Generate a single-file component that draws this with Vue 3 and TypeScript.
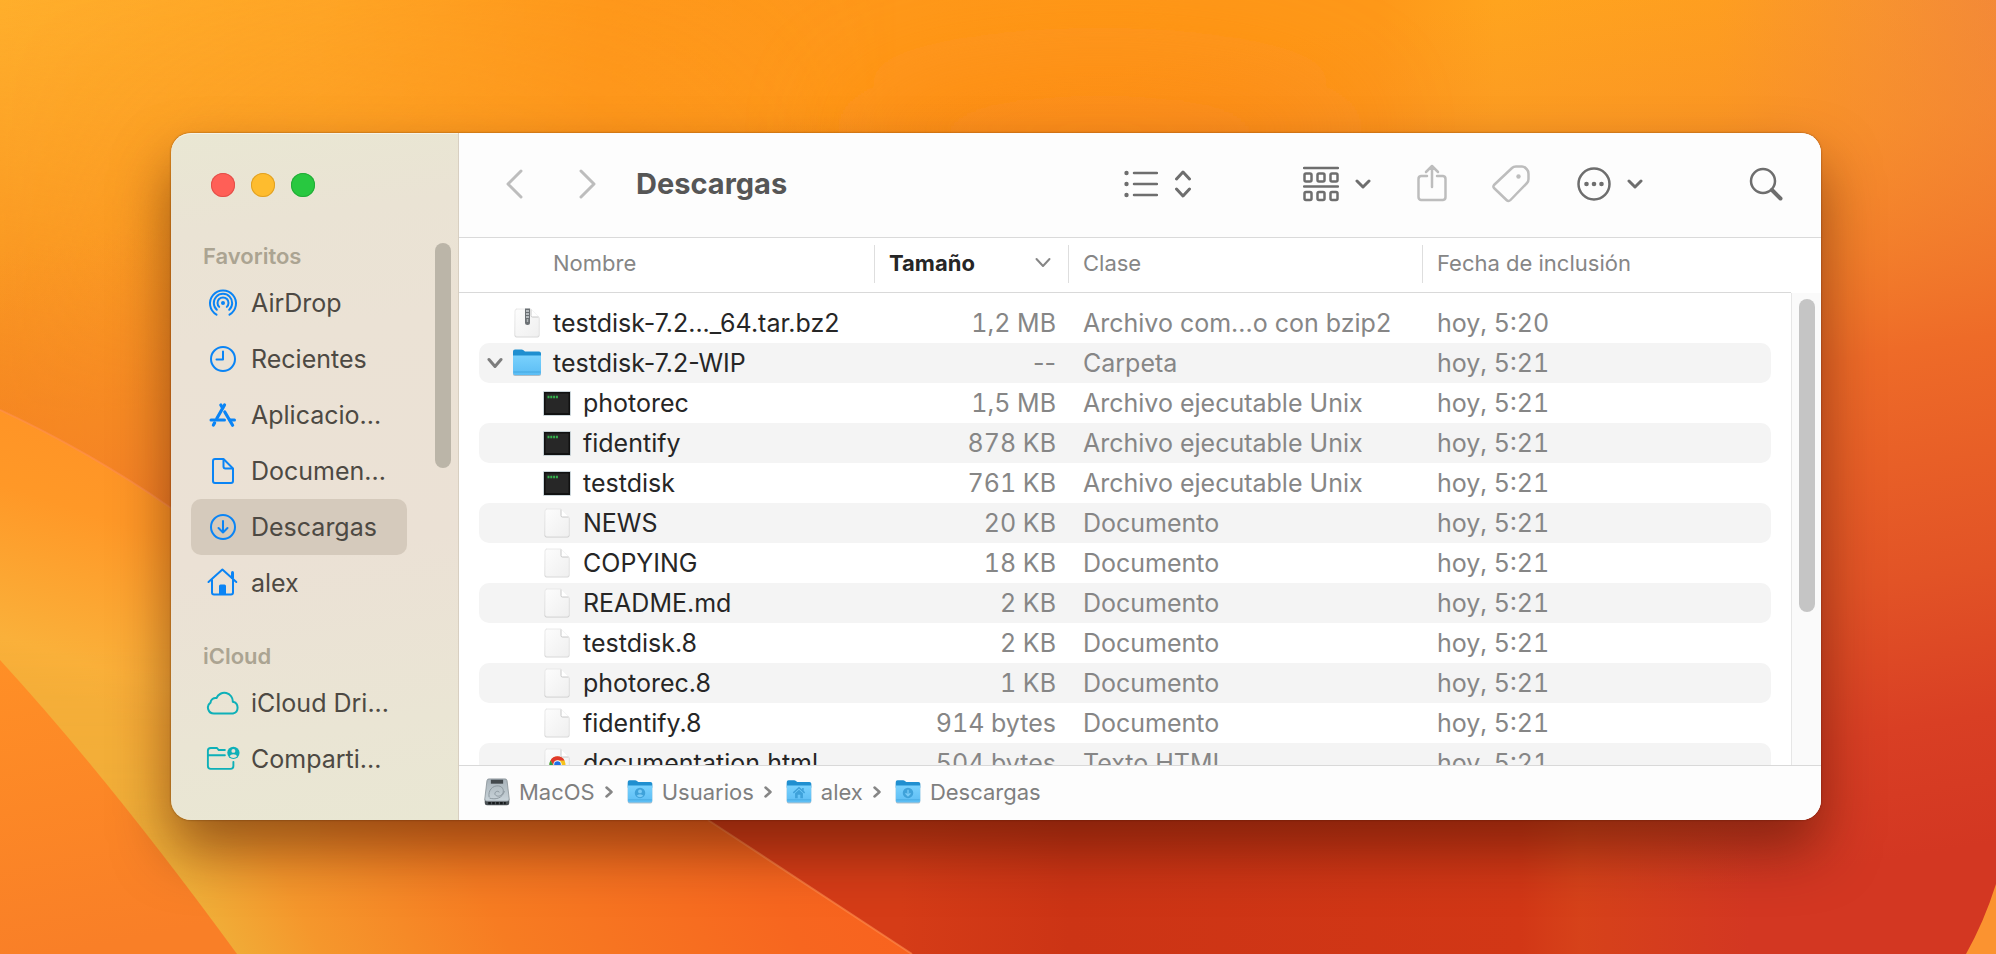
<script setup lang="ts">
interface Place {
  label: string
  icon: string
  active?: boolean
}

interface Section {
  title: string
  tint: string
  places: Place[]
}

interface FileRow {
  name: string
  size: string
  kind: string
  date: string
  icon: string
  nested?: boolean
  open?: boolean
}

const sections: Section[] = [
  {
    title: 'Favoritos',
    tint: 'blue',
    places: [
      { label: 'AirDrop', icon: 'airdrop' },
      { label: 'Recientes', icon: 'clock' },
      { label: 'Aplicacio...', icon: 'apps' },
      { label: 'Documen...', icon: 'page' },
      { label: 'Descargas', icon: 'download', active: true },
      { label: 'alex', icon: 'home' },
    ],
  },
  {
    title: 'iCloud',
    tint: 'teal',
    places: [
      { label: 'iCloud Dri...', icon: 'cloud' },
      { label: 'Comparti...', icon: 'shared' },
    ],
  },
]

const unix = 'Archivo ejecutable Unix'
const doc = 'Documento'

const files: FileRow[] = [
  { name: 'testdisk-7.2..._64.tar.bz2', size: '1,2 MB', kind: 'Archivo com...o con bzip2', date: 'hoy, 5:20', icon: 'zip' },
  { name: 'testdisk-7.2-WIP', size: '--', kind: 'Carpeta', date: 'hoy, 5:21', icon: 'folder', open: true },
  { name: 'photorec', size: '1,5 MB', kind: unix, date: 'hoy, 5:21', icon: 'exec', nested: true },
  { name: 'fidentify', size: '878 KB', kind: unix, date: 'hoy, 5:21', icon: 'exec', nested: true },
  { name: 'testdisk', size: '761 KB', kind: unix, date: 'hoy, 5:21', icon: 'exec', nested: true },
  { name: 'NEWS', size: '20 KB', kind: doc, date: 'hoy, 5:21', icon: 'file', nested: true },
  { name: 'COPYING', size: '18 KB', kind: doc, date: 'hoy, 5:21', icon: 'file', nested: true },
  { name: 'README.md', size: '2 KB', kind: doc, date: 'hoy, 5:21', icon: 'file', nested: true },
  { name: 'testdisk.8', size: '2 KB', kind: doc, date: 'hoy, 5:21', icon: 'file', nested: true },
  { name: 'photorec.8', size: '1 KB', kind: doc, date: 'hoy, 5:21', icon: 'file', nested: true },
  { name: 'fidentify.8', size: '914 bytes', kind: doc, date: 'hoy, 5:21', icon: 'file', nested: true },
  { name: 'documentation.html', size: '504 bytes', kind: 'Texto HTML', date: 'hoy, 5:21', icon: 'html', nested: true },
]

const crumbs = [
  { label: 'MacOS', icon: 'disk' },
  { label: 'Usuarios', icon: 'folder-user' },
  { label: 'alex', icon: 'folder-home' },
  { label: 'Descargas', icon: 'folder-down' },
]
</script>

<template>
  <svg class="defs" aria-hidden="true">
    <defs>
      <linearGradient id="g-sheet" x1="0" y1="0" x2="1" y2="1">
        <stop offset="0" stop-color="#fdfdfd" />
        <stop offset="1" stop-color="#efefef" />
      </linearGradient>
      <linearGradient id="g-folder" x1="0" y1="0" x2="0" y2="1">
        <stop offset="0" stop-color="#79d1fd" />
        <stop offset="1" stop-color="#5cbdf4" />
      </linearGradient>
      <linearGradient id="g-disk" x1="0" y1="0" x2="0" y2="1">
        <stop offset="0" stop-color="#a9b3ba" />
        <stop offset="1" stop-color="#c9d4da" />
      </linearGradient>
    </defs>

    <symbol id="i-airdrop" viewBox="0 0 34 34">
      <g fill="none" stroke="currentColor" stroke-width="2" stroke-linecap="round">
        <path d="M10.500 28.700 A13 13 0 1 1 23.500 28.700" />
        <path d="M10.800 23.800 A9.200 9.200 0 1 1 23.200 23.800" />
        <path d="M13.200 20.900 A5.500 5.500 0 1 1 20.800 20.900" />
      </g>
      <circle cx="17" cy="17" r="2" fill="currentColor" />
    </symbol>
    <symbol id="i-clock" viewBox="0 0 34 34">
      <g fill="none" stroke="currentColor" stroke-width="2" stroke-linecap="round" stroke-linejoin="round">
        <circle cx="17" cy="17" r="12" />
        <path d="M17 9.500V17.500H10.500" />
      </g>
    </symbol>
    <symbol id="i-apps" viewBox="0 0 34 34">
      <g fill="none" stroke="currentColor" stroke-linecap="round" stroke-linejoin="round">
        <path d="M18.500 7L10.800 20.500M8.600 24.900L7.400 27" stroke-width="3.200" />
        <path d="M14.800 7L16.600 10M18.800 14L26.600 27.200" stroke-width="3.200" />
        <path d="M5 22H18.500M24 22H28.500" stroke-width="3" />
      </g>
    </symbol>
    <symbol id="i-page" viewBox="0 0 34 34">
      <g fill="none" stroke="currentColor" stroke-width="2" stroke-linejoin="round">
        <path d="M9 5H17.500L27 14.500V27A2 2 0 0 1 25 29H9A2 2 0 0 1 7 27V7A2 2 0 0 1 9 5Z" />
        <path d="M17.500 5.500V12.500A2 2 0 0 0 19.500 14.500H26.500" />
      </g>
    </symbol>
    <symbol id="i-download" viewBox="0 0 34 34">
      <g fill="none" stroke="currentColor" stroke-width="2" stroke-linecap="round" stroke-linejoin="round">
        <circle cx="17" cy="17" r="12" />
        <path d="M17 11V22.500M12.500 18L17 22.500L21.500 18" />
      </g>
    </symbol>
    <symbol id="i-home" viewBox="0 0 34 34">
      <g fill="none" stroke="currentColor" stroke-width="2" stroke-linecap="round" stroke-linejoin="round">
        <path d="M2.500 16L16.400 3.600L30.300 16" />
        <path d="M6 14V26.500A2 2 0 0 0 8 28.500H25A2 2 0 0 0 27 26.500V14" />
        <path d="M26.500 6.500V11.500" stroke-width="3" />
      </g>
      <path d="M13 28V20A1.500 1.500 0 0 1 14.500 18.500H18.500A1.500 1.500 0 0 1 20 20V28Z" fill="currentColor" />
    </symbol>
    <symbol id="i-cloud" viewBox="0 0 34 34">
      <path
        d="M8 27.500A6 6 0 0 1 4.500 16.600A5 5 0 0 1 10.500 12A8.500 8.500 0 0 1 26.800 15.800A6 6 0 0 1 27 27.500Z"
        fill="none" stroke="currentColor" stroke-width="2" stroke-linejoin="round"
      />
    </symbol>
    <symbol id="i-shared" viewBox="0 0 36 34">
      <g fill="none" stroke="currentColor" stroke-width="2" stroke-linecap="round" stroke-linejoin="round">
        <path d="M20 7.500H13.500L11.500 5.300H5A3 3 0 0 0 2 8.300V24.500A3 3 0 0 0 5 27.500H26A3 3 0 0 0 29 24.500V20" />
        <path d="M2 13H20" />
      </g>
      <circle cx="29" cy="10.500" r="6.500" fill="currentColor" />
      <circle cx="29" cy="8.400" r="2.100" fill="#ebe2d5" />
      <path d="M25 14.100A4.200 3 0 0 1 33 14.100A5.400 5.400 0 0 1 25 14.100Z" fill="#ebe2d5" />
    </symbol>

    <symbol id="i-file" viewBox="0 0 32 32">
      <path d="M4 3H20L28.500 11V28.500A2 2 0 0 1 26.500 30.500H5.500A2 2 0 0 1 3.500 28.500Z" fill="#000" opacity=".16" />
      <path d="M5.500 2H20L28 10V27.500A2 2 0 0 1 26 29.500H6A2 2 0 0 1 4 27.500V4A2 2 0 0 1 6 2Z" fill="url(#g-sheet)" stroke="#e6e6e6" stroke-width=".8" />
      <path d="M20 2V8.500A1.500 1.500 0 0 0 21.500 10H28Z" fill="#fff" />
      <path d="M20 2.500V8.500A1.500 1.500 0 0 0 21.500 10H27.500" fill="none" stroke="#c2c2c2" stroke-width=".9" />
    </symbol>
    <symbol id="i-zip" viewBox="0 0 32 32">
      <use href="#i-file" />
      <path d="M14 1.500H19V15.500A2.500 2.500 0 0 1 14 15.500Z" fill="#6b7074" />
      <path d="M15 4H18M15 7H18M15 10H18" stroke="#cfd3d6" stroke-width="1.300" />
      <path d="M16.500 12V15" stroke="#aeb3b6" stroke-width="1.500" />
    </symbol>
    <symbol id="i-html" viewBox="0 0 32 32">
      <use href="#i-file" />
      <circle cx="16.500" cy="17.500" r="8" fill="#f6c21c" />
      <path d="M9.500 13.500A8 8 0 0 1 23.500 13.500H16.500L12.800 19.500Z" fill="#e0392b" />
      <path d="M9.500 13.500L13 19.500L16.500 25.500A8 8 0 0 1 9.500 13.500Z" fill="#2b9e48" />
      <circle cx="16.500" cy="17.500" r="4.200" fill="#fff" />
      <circle cx="16.500" cy="17.500" r="3.300" fill="#1f6fe8" />
    </symbol>
    <symbol id="i-exec" viewBox="0 0 32 32">
      <rect x="2" y="4" width="28" height="25" rx="1" fill="#9fb3bb" opacity=".55" />
      <rect x="3" y="5" width="26" height="23" fill="#111" />
      <rect x="4.500" y="6.500" width="23" height="19.500" fill="#272727" />
      <path d="M6.500 10H17" stroke="#35b04c" stroke-width="2.400" stroke-dasharray="2 .8" />
    </symbol>
    <symbol id="i-folder" viewBox="0 0 32 32">
      <path d="M2 6V27A2 2 0 0 0 4 29H28A2 2 0 0 0 30 27V6Z" fill="#31566c" opacity=".35" />
      <path d="M2 11V4.500A2 2 0 0 1 4 2.500H10.500A3 3 0 0 1 12.500 3.300L14 4.500H28A2 2 0 0 1 30 6.500V11Z" fill="#1f8fd0" />
      <path d="M2 8.500H30V26A2 2 0 0 1 28 28H4A2 2 0 0 1 2 26Z" fill="url(#g-folder)" />
      <path d="M2.500 25H29.500" stroke="#42a7e0" stroke-width="1" />
    </symbol>
    <symbol id="i-folder-user" viewBox="0 0 32 32">
      <use href="#i-folder" />
      <circle cx="16" cy="17" r="6" fill="#3fa2da" />
      <circle cx="16" cy="15.300" r="2.200" fill="#79cbf7" />
      <path d="M12.300 20.300A4 3 0 0 1 19.700 20.300A5 5 0 0 1 12.300 20.300Z" fill="#79cbf7" />
    </symbol>
    <symbol id="i-folder-home" viewBox="0 0 32 32">
      <use href="#i-folder" />
      <path d="M9.500 17L16 11L22.500 17" fill="none" stroke="#3fa2da" stroke-width="1.600" />
      <path d="M11.500 17.500L16 13.500L20.500 17.500V23H17.500V19H14.500V23H11.500Z" fill="#3fa2da" />
      <path d="M20.500 11.500V14.500" stroke="#3fa2da" stroke-width="1.800" />
    </symbol>
    <symbol id="i-folder-down" viewBox="0 0 32 32">
      <use href="#i-folder" />
      <circle cx="16" cy="17" r="6" fill="#3fa2da" />
      <path d="M16 13.500V20M13.200 17.500L16 20.300L18.800 17.500" fill="none" stroke="#79cbf7" stroke-width="1.500" />
    </symbol>
    <symbol id="i-disk" viewBox="0 0 32 32">
      <path d="M2 24H30V28.500A2.500 2.500 0 0 1 27.500 31H4.500A2.500 2.500 0 0 1 2 28.500Z" fill="#4a5054" />
      <path d="M4.500 3A2.500 2.500 0 0 1 7 1H25A2.500 2.500 0 0 1 27.500 3L30 24A2.500 2.500 0 0 1 27.500 26.500H4.500A2.500 2.500 0 0 1 2 24Z" fill="url(#g-disk)" stroke="#7c868c" stroke-width=".8" />
      <rect x="9" y="2" width="14" height="4.500" fill="#43494d" />
      <path d="M7 22C5.500 14 11 8.500 17.500 9C23.500 9.500 25 16 21 19.500C17 22.500 12 19.500 14 16.500C15.500 14.500 18.500 15 18.500 16.500M7.500 23C14 25 22 23.500 24.500 15" fill="none" stroke="#8a969d" stroke-width="1.100" />
      <path d="M6 28.800H26" stroke="#15181a" stroke-width="2.500" stroke-dasharray="3 1.500" />
    </symbol>
  </svg>

  <main class="desktop">
    <svg class="wallpaper" viewBox="0 0 1996 954" preserveAspectRatio="none" aria-hidden="true">
      <defs>
        <linearGradient id="w-top" x1="0" y1="0" x2="1996" y2="0" gradientUnits="userSpaceOnUse">
          <stop offset="0" stop-color="#ffaf2c" />
          <stop offset=".16" stop-color="#ffa726" />
          <stop offset=".3" stop-color="#ff991b" />
          <stop offset=".6" stop-color="#fe9719" />
          <stop offset=".69" stop-color="#fe9819" />
          <stop offset=".75" stop-color="#ffa41e" />
          <stop offset=".86" stop-color="#ffa01f" />
          <stop offset=".94" stop-color="#f89530" />
          <stop offset="1" stop-color="#f38a3a" />
        </linearGradient>
        <linearGradient id="w-left" x1="0" y1="0" x2="60" y2="420" gradientUnits="userSpaceOnUse">
          <stop offset="0" stop-color="#f98f1e" stop-opacity="0" />
          <stop offset="1" stop-color="#f6871c" />
        </linearGradient>
        <linearGradient id="w-left-mask" x1="0" y1="0" x2="900" y2="0" gradientUnits="userSpaceOnUse">
          <stop offset="0" stop-color="#fff" />
          <stop offset="1" stop-color="#000" />
        </linearGradient>
        <mask id="w-m"><rect width="1996" height="954" fill="url(#w-left-mask)" /></mask>
        <linearGradient id="w-red" x1="1500" y1="0" x2="1650" y2="900" gradientUnits="userSpaceOnUse">
          <stop offset="0" stop-color="#f58a2c" stop-opacity="0" />
          <stop offset=".2" stop-color="#f5852a" stop-opacity=".45" />
          <stop offset=".45" stop-color="#ee6b28" />
          <stop offset=".7" stop-color="#e25326" />
          <stop offset=".86" stop-color="#d93f24" />
          <stop offset="1" stop-color="#d33722" />
        </linearGradient>
        <linearGradient id="w-base" x1="900" y1="0" x2="1750" y2="0" gradientUnits="userSpaceOnUse">
          <stop offset="0" stop-color="#d53c17" />
          <stop offset=".2" stop-color="#cc3415" />
          <stop offset=".73" stop-color="#d23716" />
          <stop offset=".8" stop-color="#d74319" stop-opacity=".9" />
          <stop offset="1" stop-color="#d74319" stop-opacity="0" />
        </linearGradient>
        <linearGradient id="w-petal" x1="190" y1="890" x2="860" y2="560" gradientUnits="userSpaceOnUse">
          <stop offset="0" stop-color="#f0ae38" />
          <stop offset=".12" stop-color="#f5972c" />
          <stop offset=".35" stop-color="#f77c22" />
          <stop offset=".7" stop-color="#f7661f" />
          <stop offset="1" stop-color="#f95f1f" />
        </linearGradient>
        <linearGradient id="w-petal-top" x1="120" y1="440" x2="40" y2="690" gradientUnits="userSpaceOnUse">
          <stop offset="0" stop-color="#ff9426" />
          <stop offset=".3" stop-color="#ff9827" />
          <stop offset=".85" stop-color="#fab03a" />
          <stop offset="1" stop-color="#f6ae39" />
        </linearGradient>
        <linearGradient id="w-fade" x1="0" y1="640" x2="0" y2="860" gradientUnits="userSpaceOnUse">
          <stop offset="0" stop-color="#fff" />
          <stop offset="1" stop-color="#000" />
        </linearGradient>
        <mask id="w-mf"><rect width="320" height="954" fill="url(#w-fade)" /></mask>
        <linearGradient id="w-front" x1="0" y1="660" x2="60" y2="954" gradientUnits="userSpaceOnUse">
          <stop offset="0" stop-color="#ff8f26" />
          <stop offset="1" stop-color="#f97f27" />
        </linearGradient>
        <filter id="w-blur" x="-50%" y="-50%" width="200%" height="200%"><feGaussianBlur stdDeviation="50" /></filter>
      </defs>
      <rect width="1996" height="954" fill="url(#w-top)" />
      <rect width="1996" height="560" fill="url(#w-left)" mask="url(#w-m)" />
      <ellipse cx="1100" cy="130" rx="260" ry="70" fill="#fd8b12" opacity=".8" filter="url(#w-blur)" />
      <rect width="1996" height="954" fill="url(#w-red)" />
      <rect y="600" x="600" width="1396" height="354" fill="url(#w-base)" />
      <path d="M0 410Q90 452 171 508L708 820L912 954H0Z" fill="url(#w-petal)" />
      <path d="M0 410Q90 452 171 508L708 820L912 954H0Z" fill="url(#w-petal-top)" mask="url(#w-mf)" />
      <path d="M0 410Q90 452 171 508M708 820L912 954" fill="none" stroke="#ff8f50" stroke-width="2" opacity=".6" />
      <path d="M0 660Q110 780 237 954H0Z" fill="url(#w-front)" />
      <path d="M1996 884Q1984 922 1966 954H1996Z" fill="#fb9330" />
    </svg>

    <section class="window" aria-label="Descargas">
      <aside class="sidebar">
        <div class="lights">
          <button class="light close" aria-label="Cerrar"></button>
          <button class="light minimize" aria-label="Minimizar"></button>
          <button class="light expand" aria-label="Ampliar"></button>
        </div>
        <div class="places">
          <nav class="places-list">
            <section v-for="s in sections" :key="s.title" class="group">
              <h2 class="group-title">{{ s.title }}</h2>
              <a
                v-for="p in s.places" :key="p.label" href="#" class="place" :class="[s.tint, { active: p.active }]"
              >
                <svg class="place-icon"><use :href="'#i-' + p.icon" /></svg>
                <span>{{ p.label }}</span>
              </a>
            </section>
          </nav>
          <div class="side-thumb"></div>
        </div>
      </aside>

      <div class="main">
        <header class="toolbar">
          <div class="history">
            <button aria-label="Atrás">
              <svg width="18" height="30" viewBox="0 0 18 30"><path d="M16 2L3 15L16 28" class="line pale heavy" /></svg>
            </button>
            <button aria-label="Adelante">
              <svg width="18" height="30" viewBox="0 0 18 30"><path d="M2 2L15 15L2 28" class="line pale heavy" /></svg>
            </button>
          </div>
          <h1 class="title">Descargas</h1>
          <div class="tools">
            <button class="tool view" aria-label="Ver como lista">
              <svg width="34" height="28" viewBox="0 0 34 28">
                <path d="M10 3H33M10 14H33M10 25H33" class="line thick" />
                <g class="solid"><circle cx="2.500" cy="3" r="2.200" /><circle cx="2.500" cy="14" r="2.200" /><circle cx="2.500" cy="25" r="2.200" /></g>
              </svg>
              <svg width="18" height="28" viewBox="0 0 18 28"><path d="M2.500 9L9 2L15.500 9M2.500 19L9 26L15.500 19" class="line heavy" /></svg>
            </button>
            <button class="tool grouping" aria-label="Agrupar">
              <svg width="36" height="36" viewBox="0 0 36 36">
                <path d="M1 2H35M1 20.500H35" class="line thick" />
                <g class="line thick">
                  <rect x="1.500" y="7.500" width="7" height="8" rx="1.500" /><rect x="14.500" y="7.500" width="7" height="8" rx="1.500" /><rect x="27.500" y="7.500" width="7" height="8" rx="1.500" />
                  <rect x="1.500" y="26" width="7" height="8" rx="1.500" /><rect x="14.500" y="26" width="7" height="8" rx="1.500" /><rect x="27.500" y="26" width="7" height="8" rx="1.500" />
                </g>
              </svg>
              <svg width="16" height="12" viewBox="0 0 16 12"><path d="M2 3L8 9L14 3" class="line heavy" /></svg>
            </button>
            <button class="tool share" aria-label="Compartir">
              <svg width="30" height="40" viewBox="0 0 30 40">
                <path d="M10 12H4A3 3 0 0 0 1.500 15V33A3 3 0 0 0 4 36H26A3 3 0 0 0 28.500 33V15A3 3 0 0 0 26 12H20M15 23V2M9 8L15 2L21 8" class="line pale thick" />
              </svg>
            </button>
            <button class="tool tag" aria-label="Etiquetas">
              <svg width="38" height="38" viewBox="0 0 38 38">
                <path d="M2 20L20 3Q21.500 1.500 24 1.500H30Q32 1.500 33.500 3L35 4.500Q36.500 6 36.500 9V14Q36.500 16.500 35 18L18.500 35Q16.500 37 14.500 35L2 23Q.8 21.500 2 20Z" class="line pale thick" />
                <circle cx="26.500" cy="11.500" r="2.200" fill="#bdbdbd" />
              </svg>
            </button>
            <button class="tool more" aria-label="Más acciones">
              <svg width="34" height="34" viewBox="0 0 34 34">
                <circle cx="17" cy="17" r="15.500" class="line thick" />
                <g class="solid"><circle cx="9.500" cy="17" r="2.300" /><circle cx="17" cy="17" r="2.300" /><circle cx="24.500" cy="17" r="2.300" /></g>
              </svg>
              <svg width="16" height="12" viewBox="0 0 16 12"><path d="M2 3L8 9L14 3" class="line heavy" /></svg>
            </button>
            <button class="tool find" aria-label="Buscar">
              <svg width="34" height="34" viewBox="0 0 34 34">
                <circle cx="14" cy="14" r="12" class="line thick" />
                <path d="M23 23L31.500 31.500" class="line bold" />
              </svg>
            </button>
          </div>
        </header>

        <div class="listing">
          <div class="scroller">
            <table>
              <colgroup>
                <col class="c-name" />
                <col class="c-size" />
                <col class="c-kind" />
                <col />
              </colgroup>
              <thead>
                <tr>
                  <th scope="col" class="h-name">Nombre</th>
                  <th scope="col" aria-sort="descending">
                    <button class="sort">
                      Tamaño
                      <svg width="16" height="12" viewBox="0 0 16 12"><path d="M1.500 2L8 9L14.500 2" class="line gray" /></svg>
                    </button>
                  </th>
                  <th scope="col">Clase</th>
                  <th scope="col">Fecha de inclusión</th>
                </tr>
              </thead>
              <tbody>
                <tr v-for="f in files" :key="f.name">
                  <td class="name">
                    <div class="name-box" :class="{ nested: f.nested }">
                      <span class="slot">
                        <button v-if="f.open" aria-label="Contraer carpeta">
                          <svg width="16" height="12" viewBox="0 0 16 12"><path d="M2 2.500L8 9.500L14 2.500" class="line heavy mid" /></svg>
                        </button>
                      </span>
                      <svg class="file-icon"><use :href="'#i-' + f.icon" /></svg>
                      <span>{{ f.name }}</span>
                    </div>
                  </td>
                  <td class="size" :class="{ figures: f.size !== '--' }">{{ f.size }}</td>
                  <td class="kind">{{ f.kind }}</td>
                  <td class="date figures">{{ f.date }}</td>
                </tr>
              </tbody>
            </table>
          </div>
          <div class="track"><div class="thumb"></div></div>
        </div>

        <nav class="pathbar" aria-label="Ruta">
          <template v-for="(c, i) in crumbs" :key="c.label">
            <svg v-if="i" class="sep" width="8" height="12" viewBox="0 0 8 12"><path d="M1.500 1.500L6.500 6L1.500 10.500" class="line gray thick" /></svg>
            <a href="#" class="crumb">
              <svg class="crumb-icon"><use :href="'#i-' + c.icon" /></svg>
              <span>{{ c.label }}</span>
            </a>
          </template>
        </nav>
      </div>
    </section>
  </main>
</template>

<style>
html,
body {
  margin: 0;
}
</style>

<style scoped>
.defs {
  position: absolute;
  width: 0;
  height: 0;
}

.desktop {
  position: relative;
  box-sizing: border-box;
  height: 100vh;
  padding: 133px 175px 134px 171px;
  display: flex;
  overflow: hidden;
  background: #f58a20;
  font-family: Inter, "Liberation Sans", sans-serif;
  font-size: 25px;
  color: #262626;
}

.wallpaper {
  position: absolute;
  inset: 0;
  width: 100%;
  height: 100%;
}

.window {
  position: relative;
  flex: 1;
  min-width: 0;
  display: flex;
  border-radius: 20px;
  box-shadow: 0 0 2px rgba(60, 20, 0, 0.6), 0 30px 56px rgba(60, 15, 0, 0.5);
}

button {
  border: 0;
  padding: 0;
  background: none;
  font: inherit;
  color: inherit;
  display: flex;
  align-items: center;
}

a {
  color: inherit;
  text-decoration: none;
}

svg {
  display: block;
  flex: none;
}

.line {
  fill: none;
  stroke: #6e6e6e;
  stroke-width: 2;
  stroke-linecap: round;
  stroke-linejoin: round;
}
.thick { stroke-width: 2.5; }
.heavy { stroke-width: 3; }
.bold { stroke-width: 4; }
.pale { stroke: #bdbdbd; }
.gray { stroke: #868686; }
.mid { stroke: #7d7d7d; }
.solid { fill: #6e6e6e; }

/* Sidebar */
.sidebar {
  flex: none;
  width: 287px;
  display: flex;
  flex-direction: column;
  border-right: 1px solid #d8cfc1;
  border-radius: 20px 0 0 20px;
  background: linear-gradient(172deg, #e9e7d3 0%, #eae3d4 14%, #ebe2d5 30%, #ebe1d5 60%, #eae5d4 85%, #e9e7d3 100%);
  box-shadow: inset 0 1px 0 rgba(255, 255, 255, 0.5);
}

.lights {
  display: flex;
  gap: 16px;
  padding: 40px;
}

.light {
  width: 24px;
  height: 24px;
  border-radius: 50%;
}
.close { background: #ff5f57; box-shadow: inset 0 0 0 1px #e2504a; }
.minimize { background: #febc2e; box-shadow: inset 0 0 0 1px #e0a125; }
.expand { background: #28c840; box-shadow: inset 0 0 0 1px #24ab38; }

.places {
  flex: 1;
  min-height: 0;
  display: flex;
  justify-content: space-between;
}

.places-list {
  width: 216px;
  margin-left: 20px;
}

.group {
  display: flex;
  flex-direction: column;
}
.group + .group { margin-top: 26px; }

.group-title {
  margin: 0;
  padding-left: 12px;
  font-size: 22px;
  line-height: 38px;
  font-weight: 600;
  color: #aba492;
}

.place {
  display: flex;
  align-items: center;
  gap: 11px;
  height: 56px;
  padding-left: 15px;
  border-radius: 10px;
  color: #4d4943;
  white-space: nowrap;
}
.place.active { background: #d5cabc; }

.place-icon {
  width: 34px;
  height: 34px;
}
.blue .place-icon { color: #0a84f5; }
.teal .place-icon { color: #0eb0b8; }

.side-thumb {
  width: 16px;
  height: 225px;
  margin: 6px 7px 0 0;
  border-radius: 8px;
  background: #bbb5a8;
}

/* Content */
.main {
  flex: 1;
  min-width: 0;
  display: flex;
  flex-direction: column;
  border-radius: 0 20px 20px 0;
  overflow: hidden;
  background: #fff;
}

.toolbar {
  box-sizing: border-box;
  display: flex;
  align-items: center;
  height: 105px;
  padding-bottom: 2px;
  border-bottom: 1px solid #dadada;
  background: #fdfdfd;
}

.history {
  display: flex;
  gap: 56px;
  margin-left: 46px;
}

.title {
  margin: 0 0 0 39px;
  font-size: 29px;
  line-height: 36px;
  font-weight: 700;
  color: #565656;
}

.tools {
  margin-left: auto;
  margin-right: 38px;
  display: flex;
  align-items: center;
}
.tool { gap: 16px; }
.grouping { margin-left: 111px; }
.share { margin-left: 46px; }
.tag { margin-left: 45px; }
.more { margin-left: 47px; }
.find { margin-left: 106px; }

.listing {
  flex: 1;
  min-height: 0;
  display: flex;
}

.scroller {
  flex: 1;
  min-width: 0;
  overflow: hidden;
}

table {
  width: 100%;
  table-layout: fixed;
  border-collapse: separate;
  border-spacing: 0;
}
.c-name { width: 415px; }
.c-size { width: 194px; }
.c-kind { width: 354px; }

th {
  box-sizing: border-box;
  height: 55px;
  padding: 0 12px 4px 15px;
  border-bottom: 1px solid #d9d9d9;
  text-align: left;
  font-size: 22px;
  font-weight: 400;
  color: #868686;
  white-space: nowrap;
  background: linear-gradient(#dedede, #dedede) 0 7px / 1px 38px no-repeat;
}
.h-name {
  padding-left: 94px;
  background: none;
}

.sort {
  width: 100%;
  padding-right: 5px;
  justify-content: space-between;
  font-weight: 700;
  color: #262626;
}

tbody::before {
  content: "";
  display: block;
  height: 10px;
}

td {
  height: 40px;
  padding: 0 12px 0 15px;
  line-height: 32px;
  color: #868686;
  white-space: nowrap;
  background-clip: padding-box;
}

tbody tr:nth-child(even) td { background-color: #f4f4f4; }

.figures { font-variant-numeric: tabular-nums; }

.name {
  padding: 0;
  border-left: 20px solid transparent;
  border-top-left-radius: 30px 10px;
  border-bottom-left-radius: 30px 10px;
  color: #262626;
}
.date {
  border-right: 20px solid transparent;
  border-top-right-radius: 30px 10px;
  border-bottom-right-radius: 30px 10px;
}
.size { text-align: right; }

.name-box {
  display: flex;
  align-items: center;
}
.name-box.nested { padding-left: 30px; }

.slot {
  width: 32px;
  display: flex;
  justify-content: center;
}

.file-icon {
  width: 32px;
  height: 32px;
  margin-right: 10px;
}

.track {
  flex: none;
  box-sizing: border-box;
  width: 30px;
  margin-top: 55px;
  padding: 6px 6px 0 7px;
  border-left: 1px solid #e6e6e6;
  background: #fafafa;
}

.thumb {
  height: 313px;
  border-radius: 8px;
  background: #c5c5c5;
}

.pathbar {
  box-sizing: border-box;
  display: flex;
  align-items: center;
  height: 55px;
  padding: 0 24px 2px;
  border-top: 1px solid #d9d9d9;
  background: #fdfdfd;
  font-size: 22px;
  color: #7f7f7f;
}

.crumb {
  display: flex;
  align-items: center;
  gap: 8px;
}

.crumb-icon {
  width: 28px;
  height: 28px;
}

.sep { margin: 0 13px 0 10px; }
</style>
